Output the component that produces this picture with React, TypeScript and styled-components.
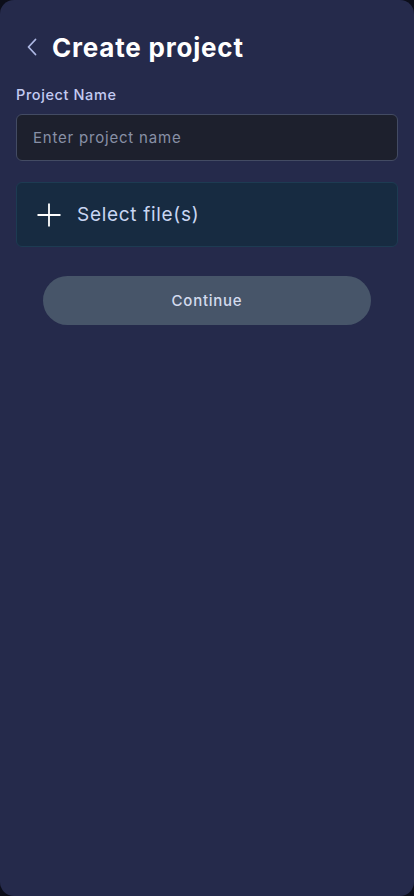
import styled, { createGlobalStyle } from 'styled-components';
import { useState } from 'react';

const GlobalStyle = createGlobalStyle`
  html, body {
    margin: 0;
    padding: 0;
    background: #0c0e1a;
  }
  * {
    box-sizing: border-box;
  }
`;

const Screen = styled.div`
  width: 414px;
  height: 896px;
  background: #252a4b;
  border-radius: 14px;
  padding: 30px 16px 0;
  font-family: Inter, "Noto Sans", sans-serif;
  display: flex;
  flex-direction: column;
`;

const Header = styled.div`
  display: flex;
  align-items: center;
  gap: 12px;
  height: 34px;
  padding-left: 10px;
`;

const BackButton = styled.button`
  background: none;
  border: none;
  padding: 0;
  width: 14px;
  height: 20px;
  display: flex;
  align-items: center;
  color: #aeb8e4;
  cursor: pointer;
`;

const Title = styled.h1`
  margin: 0;
  font-size: 26px;
  font-weight: 700;
  color: #ffffff;
  letter-spacing: 0.8px;
`;

const Label = styled.label`
  display: block;
  margin-top: 22px;
  font-size: 14.5px;
  font-weight: 500;
  color: #c3cbf2;
  line-height: 18px;
  letter-spacing: 0.6px;
`;

const Input = styled.input`
  margin-top: 10px;
  width: 100%;
  height: 47px;
  background: #1d202d;
  border: 1px solid #434b63;
  border-radius: 6px;
  padding: 0 16px;
  font-family: inherit;
  font-size: 15px;
  letter-spacing: 0.8px;
  color: #e5e9f5;
  outline: none;

  &::placeholder {
    color: #8890a6;
  }
`;

const FilePicker = styled.button`
  margin-top: 21px;
  width: 100%;
  height: 65px;
  background: #172b41;
  border: 1px solid #1d3b52;
  border-radius: 6px;
  padding: 0 20px;
  display: flex;
  align-items: center;
  gap: 16px;
  font-family: inherit;
  font-size: 19px;
  letter-spacing: 0.7px;
  color: #c9d6f2;
  cursor: pointer;
`;

const ContinueButton = styled.button<{ $disabled?: boolean }>`
  align-self: center;
  margin-top: 29px;
  width: 328px;
  height: 49px;
  border: none;
  border-radius: 25px;
  background: #475569;
  font-family: inherit;
  font-size: 15px;
  font-weight: 500;
  letter-spacing: 0.75px;
  color: #d3dbee;
  cursor: ${props => (props.$disabled ? 'default' : 'pointer')};
`;

export default function App() {
  const [name, setName] = useState('');

  return (
    <>
      <GlobalStyle />
      <Screen>
        <Header>
          <BackButton aria-label="Back">
            <svg width="12" height="18" viewBox="0 0 12 18" fill="none">
              <path d="M9.5 1.5L2.5 9L9.5 16.5" stroke="currentColor" strokeWidth="1.8" strokeLinecap="round" strokeLinejoin="round" />
            </svg>
          </BackButton>
          <Title>Create project</Title>
        </Header>

        <Label htmlFor="project-name">Project Name</Label>
        <Input
          id="project-name"
          placeholder="Enter project name"
          value={name}
          onChange={e => setName(e.target.value)}
        />

        <FilePicker>
          <svg width="24" height="24" viewBox="0 0 24 24" fill="none">
            <path d="M12 0.5V23.5M0.5 12H23.5" stroke="#ffffff" strokeWidth="1.8" />
          </svg>
          Select file(s)
        </FilePicker>

        <ContinueButton $disabled={!name}>Continue</ContinueButton>
      </Screen>
    </>
  );
}
